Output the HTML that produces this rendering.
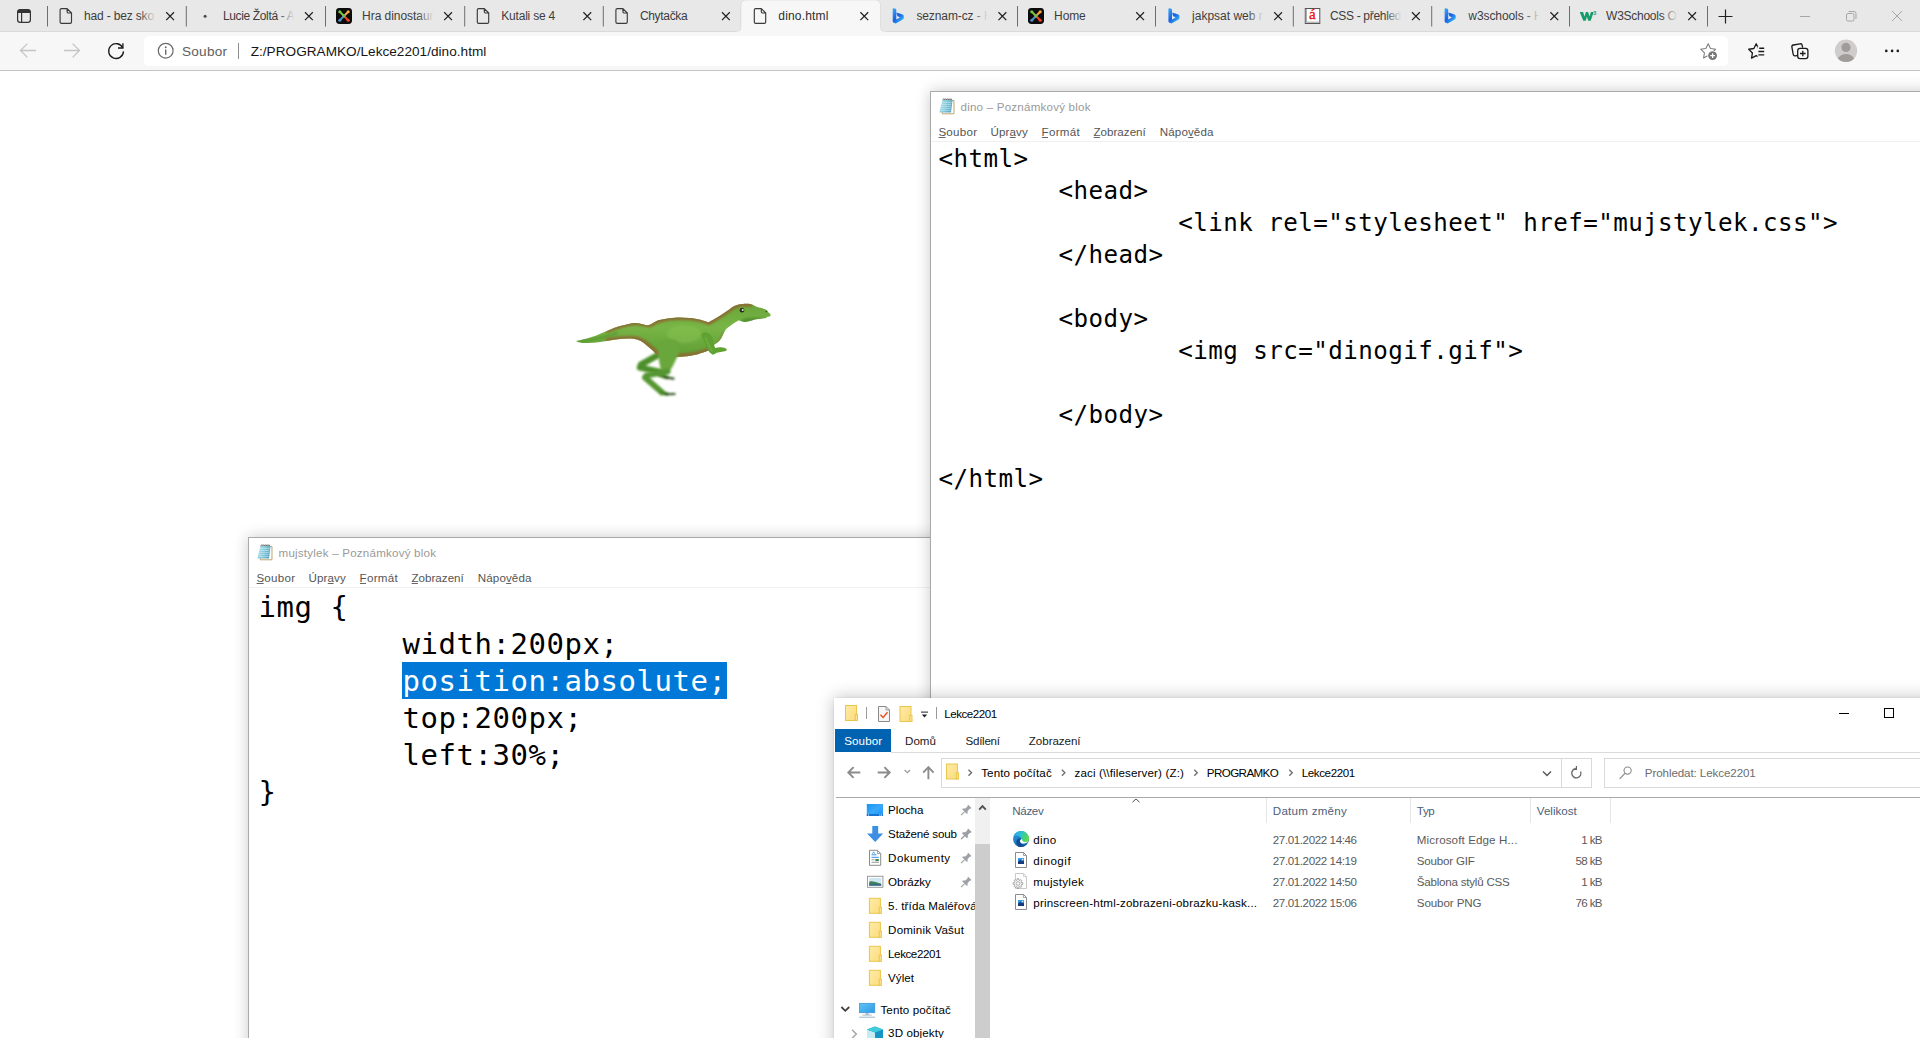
<!DOCTYPE html>
<html lang="cs">
<head>
<meta charset="utf-8">
<title>dino.html</title>
<style>

html,body{margin:0;padding:0;}
body{width:1920px;height:1038px;overflow:hidden;background:#fff;position:relative;font-family:"Liberation Sans",sans-serif;font-size:12px;color:#000;}
.abs{position:absolute;}
svg{position:absolute;left:0;top:0;overflow:visible;}
svg text{font-family:"Liberation Sans",sans-serif;white-space:pre;}
#tabbar{left:0;top:0;width:1920px;height:31px;background:#e8e8e8;border-bottom:1px solid #dadada;}
#toolbar{left:0;top:32px;width:1920px;height:38px;background:#f7f7f7;border-bottom:1px solid #c4c4c4;}
#addr{left:144px;top:36px;width:1584px;height:30px;background:#fff;border-radius:5px;}
.win{position:absolute;background:#fff;}
.np{border:1px solid #aaaaaa;box-shadow:0 0 14px rgba(0,0,0,.21);}
.np .menuline{position:absolute;left:0;top:49px;width:100%;height:1px;background:#f0f0f0;}
pre{margin:0;position:absolute;font-family:"DejaVu Sans Mono","Liberation Mono",monospace;color:#000;white-space:pre;}
.selt{color:#fff;}

</style>
</head>
<body>
<div class="abs" id="tabbar"></div>
<div class="abs" id="toolbar"></div>
<div class="abs" id="addr"></div>
<svg width="1920" height="72" viewBox="0 0 1920 72">
<defs><linearGradient id="bingg" x1="0.1" y1="0" x2="0.9" y2="1"><stop offset="0" stop-color="#3aa6f4"/><stop offset="0.5" stop-color="#1b5fe4"/><stop offset="0.8" stop-color="#2ea4ee"/><stop offset="1" stop-color="#3cd4f4"/></linearGradient>
<linearGradient id="fd0" x1="0" y1="0" x2="1" y2="0"><stop offset="0" stop-color="#e8e8e8" stop-opacity="0"/><stop offset="0.85" stop-color="#e8e8e8" stop-opacity="1"/></linearGradient>
<linearGradient id="fd1" x1="0" y1="0" x2="1" y2="0"><stop offset="0" stop-color="#e8e8e8" stop-opacity="0"/><stop offset="0.85" stop-color="#e8e8e8" stop-opacity="1"/></linearGradient>
<linearGradient id="fd2" x1="0" y1="0" x2="1" y2="0"><stop offset="0" stop-color="#e8e8e8" stop-opacity="0"/><stop offset="0.85" stop-color="#e8e8e8" stop-opacity="1"/></linearGradient>
<linearGradient id="fd3" x1="0" y1="0" x2="1" y2="0"><stop offset="0" stop-color="#e8e8e8" stop-opacity="0"/><stop offset="0.85" stop-color="#e8e8e8" stop-opacity="1"/></linearGradient>
<linearGradient id="fd4" x1="0" y1="0" x2="1" y2="0"><stop offset="0" stop-color="#e8e8e8" stop-opacity="0"/><stop offset="0.85" stop-color="#e8e8e8" stop-opacity="1"/></linearGradient>
<linearGradient id="fd5" x1="0" y1="0" x2="1" y2="0"><stop offset="0" stop-color="#f7f7f7" stop-opacity="0"/><stop offset="0.85" stop-color="#f7f7f7" stop-opacity="1"/></linearGradient>
<linearGradient id="fd6" x1="0" y1="0" x2="1" y2="0"><stop offset="0" stop-color="#e8e8e8" stop-opacity="0"/><stop offset="0.85" stop-color="#e8e8e8" stop-opacity="1"/></linearGradient>
<linearGradient id="fd7" x1="0" y1="0" x2="1" y2="0"><stop offset="0" stop-color="#e8e8e8" stop-opacity="0"/><stop offset="0.85" stop-color="#e8e8e8" stop-opacity="1"/></linearGradient>
<linearGradient id="fd8" x1="0" y1="0" x2="1" y2="0"><stop offset="0" stop-color="#e8e8e8" stop-opacity="0"/><stop offset="0.85" stop-color="#e8e8e8" stop-opacity="1"/></linearGradient>
<linearGradient id="fd9" x1="0" y1="0" x2="1" y2="0"><stop offset="0" stop-color="#e8e8e8" stop-opacity="0"/><stop offset="0.85" stop-color="#e8e8e8" stop-opacity="1"/></linearGradient>
<linearGradient id="fd10" x1="0" y1="0" x2="1" y2="0"><stop offset="0" stop-color="#e8e8e8" stop-opacity="0"/><stop offset="0.85" stop-color="#e8e8e8" stop-opacity="1"/></linearGradient>
<linearGradient id="fd11" x1="0" y1="0" x2="1" y2="0"><stop offset="0" stop-color="#e8e8e8" stop-opacity="0"/><stop offset="0.85" stop-color="#e8e8e8" stop-opacity="1"/></linearGradient>
</defs>
<path d="M736.5 31.5 Q741 31.5 741 27 V5.5 Q741 0 746.5 0 H875 Q880.5 0 880.5 5.5 V27 Q880.5 31.5 885 31.5 V32.5 H736.5 Z" fill="#f7f7f7" stroke="rgba(0,0,0,0.07)" stroke-width="1"/><rect x="736" y="31.6" width="150" height="1.4" fill="#f7f7f7"/>
<rect x="17.6" y="9.6" width="12.8" height="12.8" rx="2.6" fill="none" stroke="#333" stroke-width="1.2"/><path d="M17.6 12.6 a3 3 0 0 1 3 -3 h6.8 a3 3 0 0 1 3 3 v0.4 h-12.8 z" fill="#333"/><path d="M21.6 13 V22.4" stroke="#333" stroke-width="1.2"/>
<rect x="47.0" y="6" width="1" height="20.5" fill="#6e6e6e"/>
<rect x="185.8" y="6" width="1" height="20.5" fill="#6e6e6e"/>
<rect x="325.0" y="6" width="1" height="20.5" fill="#6e6e6e"/>
<rect x="464.2" y="6" width="1" height="20.5" fill="#6e6e6e"/>
<rect x="602.8" y="6" width="1" height="20.5" fill="#6e6e6e"/>
<rect x="1017.0" y="6" width="1" height="20.5" fill="#6e6e6e"/>
<rect x="1155.0" y="6" width="1" height="20.5" fill="#6e6e6e"/>
<rect x="1292.8" y="6" width="1" height="20.5" fill="#6e6e6e"/>
<rect x="1431.2" y="6" width="1" height="20.5" fill="#6e6e6e"/>
<rect x="1569.0" y="6" width="1" height="20.5" fill="#6e6e6e"/>
<rect x="1707.0" y="6" width="1" height="20.5" fill="#6e6e6e"/>
<path d="M61.50 8.60 h5.6 l4.4 4.4 v9 a1.4 1.4 0 0 1 -1.4 1.4 h-8.6 a1.4 1.4 0 0 1 -1.4 -1.4 v-12 a1.4 1.4 0 0 1 1.4 -1.4 z M67.10 8.60 v3 a1.4 1.4 0 0 0 1.4 1.4 h3" fill="none" stroke="#3a3a3a" stroke-width="1.15" stroke-linejoin="round"/>
<svg x="84.1" y="4" width="73" height="24" style="overflow:hidden"><text x="0" y="15.8" font-size="12" fill="#3d3d3d" letter-spacing="-0.17">had - bez skore</text></svg>
<rect x="139.5" y="5" width="19" height="22" fill="url(#fd0)"/>
<path d="M166.2 12.3 L174.0 20.1 M174.0 12.3 L166.2 20.1" stroke="#222" stroke-width="1.25" fill="none"/>
<circle cx="205.1" cy="16.2" r="1.5" fill="#4a4a4a"/>
<svg x="222.9" y="4" width="73" height="24" style="overflow:hidden"><text x="0" y="15.8" font-size="12" fill="#3d3d3d" letter-spacing="-0.355">Lucie Žoltá - Ap</text></svg>
<rect x="278.3" y="5" width="19" height="22" fill="url(#fd1)"/>
<path d="M305.0 12.3 L312.8 20.1 M312.8 12.3 L305.0 20.1" stroke="#222" stroke-width="1.25" fill="none"/>
<g transform="translate(336.00 8.00)"><rect x="0" y="0" width="16" height="16" rx="3.4" fill="#0b0b0b"/><path d="M4.3 4.3 L8.6 8.6" stroke="#7ac143" stroke-width="2" stroke-linecap="round"/><path d="M11.7 4.3 L7.4 8.6" stroke="#f9a541" stroke-width="2" stroke-linecap="round"/><path d="M4.3 11.7 L8.4 7.6" stroke="#4f91cd" stroke-width="2" stroke-linecap="round"/><path d="M11.7 11.7 L8.2 8.2" stroke="#f44321" stroke-width="2" stroke-linecap="round"/><path d="M6.6 6.6 L8.2 8.2" stroke="#7ac143" stroke-width="2" stroke-linecap="round"/><circle cx="3.8" cy="3.8" r="1.55" fill="#7ac143"/><circle cx="12.2" cy="3.8" r="1.55" fill="#f9a541"/><circle cx="3.8" cy="12.2" r="1.55" fill="#4f91cd"/><circle cx="12.2" cy="12.2" r="1.55" fill="#f44321"/></g>
<svg x="362.1" y="4" width="73" height="24" style="overflow:hidden"><text x="0" y="15.8" font-size="12" fill="#3d3d3d" letter-spacing="-0.05">Hra dinostaurus</text></svg>
<rect x="417.5" y="5" width="19" height="22" fill="url(#fd2)"/>
<path d="M444.2 12.3 L452.0 20.1 M452.0 12.3 L444.2 20.1" stroke="#222" stroke-width="1.25" fill="none"/>
<path d="M478.70 8.60 h5.6 l4.4 4.4 v9 a1.4 1.4 0 0 1 -1.4 1.4 h-8.6 a1.4 1.4 0 0 1 -1.4 -1.4 v-12 a1.4 1.4 0 0 1 1.4 -1.4 z M484.30 8.60 v3 a1.4 1.4 0 0 0 1.4 1.4 h3" fill="none" stroke="#3a3a3a" stroke-width="1.15" stroke-linejoin="round"/>
<svg x="501.3" y="4" width="73" height="24" style="overflow:hidden"><text x="0" y="15.8" font-size="12" fill="#3d3d3d" letter-spacing="-0.21">Kutali se 4</text></svg>
<path d="M583.4 12.3 L591.2 20.1 M591.2 12.3 L583.4 20.1" stroke="#222" stroke-width="1.25" fill="none"/>
<path d="M617.30 8.60 h5.6 l4.4 4.4 v9 a1.4 1.4 0 0 1 -1.4 1.4 h-8.6 a1.4 1.4 0 0 1 -1.4 -1.4 v-12 a1.4 1.4 0 0 1 1.4 -1.4 z M622.90 8.60 v3 a1.4 1.4 0 0 0 1.4 1.4 h3" fill="none" stroke="#3a3a3a" stroke-width="1.15" stroke-linejoin="round"/>
<svg x="639.9" y="4" width="73" height="24" style="overflow:hidden"><text x="0" y="15.8" font-size="12" fill="#3d3d3d" letter-spacing="-0.316">Chytačka</text></svg>
<path d="M722.0 12.3 L729.8 20.1 M729.8 12.3 L722.0 20.1" stroke="#222" stroke-width="1.25" fill="none"/>
<path d="M755.70 8.60 h5.6 l4.4 4.4 v9 a1.4 1.4 0 0 1 -1.4 1.4 h-8.6 a1.4 1.4 0 0 1 -1.4 -1.4 v-12 a1.4 1.4 0 0 1 1.4 -1.4 z M761.30 8.60 v3 a1.4 1.4 0 0 0 1.4 1.4 h3" fill="none" stroke="#3a3a3a" stroke-width="1.15" stroke-linejoin="round"/>
<svg x="778.3" y="4" width="73" height="24" style="overflow:hidden"><text x="0" y="15.8" font-size="12" fill="#2e2e2e" letter-spacing="0.172">dino.html</text></svg>
<path d="M860.4 12.3 L868.2 20.1 M868.2 12.3 L860.4 20.1" stroke="#222" stroke-width="1.25" fill="none"/>
<g transform="translate(890.30 8.00)"><path d="M2.4 1.3 C2.4 0.5 3.2 0 3.9 0.3 L5.2 0.8 C5.7 1 6 1.5 6 2 V11.5 L9.7 9.4 L7.9 8.6 C7.4 8.4 7.1 8 6.9 7.5 L6.2 5.6 C6 5 6.5 4.5 7.1 4.7 L12.3 6.5 C13 6.8 13.5 7.4 13.5 8.2 V9.8 C13.5 10.5 13.1 11.2 12.5 11.5 L6.4 15.1 C5.7 15.5 4.9 15.5 4.2 15.1 L3 14.4 C2.6 14.1 2.4 13.7 2.4 13.3 Z" fill="url(#bingg)"/></g>
<svg x="916.4" y="4" width="73" height="24" style="overflow:hidden"><text x="0" y="15.8" font-size="12" fill="#3d3d3d" letter-spacing="-0.1">seznam-cz - Hle</text></svg>
<rect x="971.8" y="5" width="19" height="22" fill="url(#fd6)"/>
<path d="M998.5 12.3 L1006.3 20.1 M1006.3 12.3 L998.5 20.1" stroke="#222" stroke-width="1.25" fill="none"/>
<g transform="translate(1028.00 8.00)"><rect x="0" y="0" width="16" height="16" rx="3.4" fill="#0b0b0b"/><path d="M4.3 4.3 L8.6 8.6" stroke="#7ac143" stroke-width="2" stroke-linecap="round"/><path d="M11.7 4.3 L7.4 8.6" stroke="#f9a541" stroke-width="2" stroke-linecap="round"/><path d="M4.3 11.7 L8.4 7.6" stroke="#4f91cd" stroke-width="2" stroke-linecap="round"/><path d="M11.7 11.7 L8.2 8.2" stroke="#f44321" stroke-width="2" stroke-linecap="round"/><path d="M6.6 6.6 L8.2 8.2" stroke="#7ac143" stroke-width="2" stroke-linecap="round"/><circle cx="3.8" cy="3.8" r="1.55" fill="#7ac143"/><circle cx="12.2" cy="3.8" r="1.55" fill="#f9a541"/><circle cx="3.8" cy="12.2" r="1.55" fill="#4f91cd"/><circle cx="12.2" cy="12.2" r="1.55" fill="#f44321"/></g>
<svg x="1054.1" y="4" width="73" height="24" style="overflow:hidden"><text x="0" y="15.8" font-size="12" fill="#3d3d3d" letter-spacing="-0.13">Home</text></svg>
<path d="M1136.2 12.3 L1144.0 20.1 M1144.0 12.3 L1136.2 20.1" stroke="#222" stroke-width="1.25" fill="none"/>
<g transform="translate(1166.00 8.00)"><path d="M2.4 1.3 C2.4 0.5 3.2 0 3.9 0.3 L5.2 0.8 C5.7 1 6 1.5 6 2 V11.5 L9.7 9.4 L7.9 8.6 C7.4 8.4 7.1 8 6.9 7.5 L6.2 5.6 C6 5 6.5 4.5 7.1 4.7 L12.3 6.5 C13 6.8 13.5 7.4 13.5 8.2 V9.8 C13.5 10.5 13.1 11.2 12.5 11.5 L6.4 15.1 C5.7 15.5 4.9 15.5 4.2 15.1 L3 14.4 C2.6 14.1 2.4 13.7 2.4 13.3 Z" fill="url(#bingg)"/></g>
<svg x="1192.1" y="4" width="73" height="24" style="overflow:hidden"><text x="0" y="15.8" font-size="12" fill="#3d3d3d" letter-spacing="0.0">jakpsat web na</text></svg>
<rect x="1247.5" y="5" width="19" height="22" fill="url(#fd8)"/>
<path d="M1274.2 12.3 L1282.0 20.1 M1282.0 12.3 L1274.2 20.1" stroke="#222" stroke-width="1.25" fill="none"/>
<g transform="translate(1304.80 8.00)"><rect x="0.5" y="0.5" width="14.5" height="15" fill="#fff" stroke="#555" stroke-width="1"/><path d="M1.5 1 V14.2 H14.5" fill="none" stroke="#9a9a9a" stroke-width="1"/><text x="4.3" y="11.2" font-size="15" fill="#f01010" stroke="#f01010" stroke-width="0.3" style="font-family:'Liberation Serif',serif">á</text></g>
<svg x="1329.9" y="4" width="73" height="24" style="overflow:hidden"><text x="0" y="15.8" font-size="12" fill="#3d3d3d" letter-spacing="-0.313">CSS - přehled v</text></svg>
<rect x="1385.3" y="5" width="19" height="22" fill="url(#fd9)"/>
<path d="M1412.0 12.3 L1419.8 20.1 M1419.8 12.3 L1412.0 20.1" stroke="#222" stroke-width="1.25" fill="none"/>
<g transform="translate(1442.20 8.00)"><path d="M2.4 1.3 C2.4 0.5 3.2 0 3.9 0.3 L5.2 0.8 C5.7 1 6 1.5 6 2 V11.5 L9.7 9.4 L7.9 8.6 C7.4 8.4 7.1 8 6.9 7.5 L6.2 5.6 C6 5 6.5 4.5 7.1 4.7 L12.3 6.5 C13 6.8 13.5 7.4 13.5 8.2 V9.8 C13.5 10.5 13.1 11.2 12.5 11.5 L6.4 15.1 C5.7 15.5 4.9 15.5 4.2 15.1 L3 14.4 C2.6 14.1 2.4 13.7 2.4 13.3 Z" fill="url(#bingg)"/></g>
<svg x="1468.3" y="4" width="73" height="24" style="overflow:hidden"><text x="0" y="15.8" font-size="12" fill="#3d3d3d" letter-spacing="-0.08">w3schools - Hle</text></svg>
<rect x="1523.7" y="5" width="19" height="22" fill="url(#fd10)"/>
<path d="M1550.4 12.3 L1558.2 20.1 M1558.2 12.3 L1550.4 20.1" stroke="#222" stroke-width="1.25" fill="none"/>
<g transform="translate(1578.10 8.00)"><path d="M1.6 4 H5 L6.4 8.6 L7.8 4 H10 L11.4 8.6 L12.8 4 H15.6 L12.6 12.8 H10.2 L8.8 8.8 L7.6 12.8 H5.2 Z" fill="#159c6a"/><text x="15.2" y="6.6" font-size="5.5" fill="#159c6a" style="font-weight:bold">3</text></g>
<svg x="1606.1" y="4" width="73" height="24" style="overflow:hidden"><text x="0" y="15.8" font-size="12" fill="#3d3d3d" letter-spacing="-0.263">W3Schools Onl</text></svg>
<rect x="1661.5" y="5" width="19" height="22" fill="url(#fd11)"/>
<path d="M1688.2 12.3 L1696.0 20.1 M1696.0 12.3 L1688.2 20.1" stroke="#222" stroke-width="1.25" fill="none"/>
<path d="M1718.5 16.5 H1732.5 M1725.5 9.5 V23.5" stroke="#222" stroke-width="1.2" fill="none"/>
<path d="M1800 16.5 H1810" stroke="#a6a6a6" stroke-width="1"/>
<rect x="1846.5" y="13.5" width="7.5" height="7.5" rx="1.5" fill="none" stroke="#a6a6a6" stroke-width="1"/><path d="M1848.5 11.5 h5.5 a2 2 0 0 1 2 2 v5.5" fill="none" stroke="#a6a6a6" stroke-width="1"/>
<path d="M1892 11 L1902 21 M1902 11 L1892 21" stroke="#a6a6a6" stroke-width="1" fill="none"/>
<path d="M36 50.5 H20.6 M27.4 43.6 L20.5 50.5 L27.4 57.4" stroke="#c4c4c4" stroke-width="1.3" fill="none"/>
<path d="M64 50.5 H79.4 M72.6 43.6 L79.5 50.5 L72.6 57.4" stroke="#c4c4c4" stroke-width="1.3" fill="none"/>
<path d="M122.8 47.9 A7.4 7.4 0 1 0 123.5 51.4" stroke="#1a1a1a" stroke-width="1.3" fill="none"/><path d="M122.9 43.2 V48 H118" stroke="#1a1a1a" stroke-width="1.3" fill="none"/>
<circle cx="165.7" cy="50.7" r="7.4" fill="none" stroke="#6a6a6a" stroke-width="1.2"/><circle cx="165.7" cy="47.2" r="0.95" fill="#6a6a6a"/><path d="M165.7 49.6 V54.8" stroke="#6a6a6a" stroke-width="1.4"/>
<text x="182.00" y="55.60" font-size="13.6" fill="#5e5e5e" textLength="45.00" lengthAdjust="spacing">Soubor</text>
<rect x="238" y="43" width="1" height="16" fill="#8e8e8e"/>
<text x="250.70" y="55.60" font-size="13.6" fill="#161616" textLength="235.60" lengthAdjust="spacing">Z:/PROGRAMKO/Lekce2201/dino.html</text>
<path d="M1708.20 43.70 L1710.52 48.40 L1715.71 49.16 L1711.96 52.82 L1712.84 57.99 L1708.20 55.55 L1703.56 57.99 L1704.44 52.82 L1700.69 49.16 L1705.88 48.40 Z" fill="none" stroke="#7a7a7a" stroke-width="1.05" stroke-linejoin="round" stroke-linecap="round"/>
<circle cx="1712.6" cy="55.6" r="5.2" fill="#fff"/><circle cx="1712.6" cy="55.6" r="4.4" fill="#767676"/><path d="M1710.2 55.6 H1715 M1712.6 53.2 V58" stroke="#fff" stroke-width="1.2"/>
<path d="M1756.20 43.80 L1758.52 48.50 L1763.71 49.26 L1759.96 52.92 L1760.84 58.09 L1756.20 55.65 L1751.56 58.09 L1752.44 52.92 L1748.69 49.26 L1753.88 48.50 Z" fill="none" stroke="#1a1a1a" stroke-width="1.3" stroke-linejoin="round" stroke-linecap="round"/>
<rect x="1757.6" y="46.4" width="8.6" height="14" fill="#f7f7f7"/>
<path d="M1759.2 48.2 H1764.2 M1758.4 51.5 H1764.2 M1758.4 54.8 H1764.2" stroke="#1a1a1a" stroke-width="1.35"/>
<path d="M1798 55.4 l-2.6 0.5 a1.9 1.9 0 0 1 -2.2 -1.5 l-1.3 -7.2 a1.9 1.9 0 0 1 1.5 -2.2 l6.6 -1.2 a1.9 1.9 0 0 1 2.2 1.5 l0.4 2.4" fill="none" stroke="#1a1a1a" stroke-width="1.3"/>
<rect x="1797.7" y="48.4" width="10.2" height="10.2" rx="2.3" fill="#f7f7f7" stroke="#1a1a1a" stroke-width="1.3"/><path d="M1800 53.5 H1805.6 M1802.8 50.7 V56.3" stroke="#1a1a1a" stroke-width="1.3"/>
<clipPath id="avc"><circle cx="1846" cy="50.8" r="11.2"/></clipPath><circle cx="1846" cy="50.8" r="11.2" fill="#cfcdcb"/><g clip-path="url(#avc)"><circle cx="1846" cy="47.4" r="4.6" fill="#9f9c99"/><ellipse cx="1846" cy="60.6" rx="8.6" ry="6.6" fill="#9f9c99"/></g>
<circle cx="1886.3" cy="50.9" r="1.3" fill="#1a1a1a"/><circle cx="1892.1" cy="50.9" r="1.3" fill="#1a1a1a"/><circle cx="1897.8" cy="50.9" r="1.3" fill="#1a1a1a"/>
</svg>
<svg style="left:560px;top:290px" width="230" height="120" viewBox="560 290 230 120">
<defs><filter id="b1" x="-10%" y="-10%" width="120%" height="120%"><feGaussianBlur stdDeviation="0.55"/></filter><filter id="b2" x="-20%" y="-20%" width="140%" height="140%"><feGaussianBlur stdDeviation="1.05"/></filter><linearGradient id="dg" x1="0" y1="0" x2="0" y2="1"><stop offset="0" stop-color="#6aa63a"/><stop offset="0.45" stop-color="#78b546"/><stop offset="1" stop-color="#5f9d34"/></linearGradient><linearGradient id="tg" x1="0" y1="0" x2="1" y2="0"><stop offset="0" stop-color="#4f9428"/><stop offset="1" stop-color="#72b040"/></linearGradient></defs>
<g filter="url(#b2)" fill="none" stroke-linecap="round" stroke-linejoin="round"><path d="M660 354 L641 364.5 L640 367.5 L663 372.6" stroke="#4e8f2a" stroke-width="6.4"/><path d="M660 375.2 L667 377.4" stroke="#4a8628" stroke-width="4"/><path d="M664 377 L673.5 378.6" stroke="#2f4f1c" stroke-width="2.2"/></g>
<g filter="url(#b1)"><path d="M576 341 C581 339.8 586 338.8 590.2 337.5 C598 335 604 332 610.5 329.4 C616 327.2 621 325.6 625.6 324.8 C630 323.6 633 323 635.8 323.1 C639 323.4 641 324 642.9 324.3 C646 325.2 648 325.4 649.9 324.8 C652 323.6 654 322.2 656 321.3 C659 320 662 319.2 666.1 318.8 C670 318 674 317.6 677.3 317.5 C682 317.4 686 317.6 690 318 C694 318.4 697 319 700.5 319.8 C703.6 320.6 706 321.6 708.6 322.3 C713 320 717 317.6 720.7 315.2 C724 313 728 310.4 730.8 308.2 C733 306.6 735 305.6 736.9 305.1 C739 304.3 741 304 743 303.9 C746 303.7 749 303.8 751.1 304.3 C753.4 305 755 306.2 757.1 307.1 C760 308 763 308.4 765.2 309.2 C767 310 768 311 768.3 312.2 C769.4 313 770.6 314 770.8 315.2 C770 316.4 768.6 316.8 767.3 316.8 C766.8 317.6 766 318.2 765.2 318.3 C762 318.6 759 318.8 756.1 319.3 C753 320 750.6 321 748 321.5 C746.4 321.9 744.6 322 743 321.8 C741.4 321.5 740 320.8 738.9 320.3 C736 321.8 733 323.6 730.8 325.4 C728.8 326.8 727 328 725.8 329.4 C724.4 331.4 723.6 333.4 722.7 335.5 C721.8 337.4 721 339 719.7 340.5 C718.2 342.2 716.4 343.6 714.6 344.6 C713 346.4 711.6 348 710 349.6 C707 351.4 704 352.4 700.5 353.2 C697 354.6 694 355.2 690.4 355.7 C686 356.4 682 356.7 678.2 356.7 C672 357 664 356.4 657 354.7 C655.6 353.8 654.8 352.8 654 351.7 C652 350 650 348.4 647.9 346.6 C645.6 344.4 643.4 342.4 640.8 341 C637.6 339.4 634.4 338.6 630.7 338.5 C625.6 338.4 620.6 338.8 615.5 339.5 C610.4 340.4 605.4 341.4 600.4 342 C595.4 342.8 590 343.2 585.2 343.1 C581.6 343 578.4 342.4 576 341 Z" fill="url(#dg)"/>
<clipPath id="dclip"><path d="M576 341 C581 339.8 586 338.8 590.2 337.5 C598 335 604 332 610.5 329.4 C616 327.2 621 325.6 625.6 324.8 C630 323.6 633 323 635.8 323.1 C639 323.4 641 324 642.9 324.3 C646 325.2 648 325.4 649.9 324.8 C652 323.6 654 322.2 656 321.3 C659 320 662 319.2 666.1 318.8 C670 318 674 317.6 677.3 317.5 C682 317.4 686 317.6 690 318 C694 318.4 697 319 700.5 319.8 C703.6 320.6 706 321.6 708.6 322.3 C713 320 717 317.6 720.7 315.2 C724 313 728 310.4 730.8 308.2 C733 306.6 735 305.6 736.9 305.1 C739 304.3 741 304 743 303.9 C746 303.7 749 303.8 751.1 304.3 C753.4 305 755 306.2 757.1 307.1 C760 308 763 308.4 765.2 309.2 C767 310 768 311 768.3 312.2 C769.4 313 770.6 314 770.8 315.2 C770 316.4 768.6 316.8 767.3 316.8 C766.8 317.6 766 318.2 765.2 318.3 C762 318.6 759 318.8 756.1 319.3 C753 320 750.6 321 748 321.5 C746.4 321.9 744.6 322 743 321.8 C741.4 321.5 740 320.8 738.9 320.3 C736 321.8 733 323.6 730.8 325.4 C728.8 326.8 727 328 725.8 329.4 C724.4 331.4 723.6 333.4 722.7 335.5 C721.8 337.4 721 339 719.7 340.5 C718.2 342.2 716.4 343.6 714.6 344.6 C713 346.4 711.6 348 710 349.6 C707 351.4 704 352.4 700.5 353.2 C697 354.6 694 355.2 690.4 355.7 C686 356.4 682 356.7 678.2 356.7 C672 357 664 356.4 657 354.7 C655.6 353.8 654.8 352.8 654 351.7 C652 350 650 348.4 647.9 346.6 C645.6 344.4 643.4 342.4 640.8 341 C637.6 339.4 634.4 338.6 630.7 338.5 C625.6 338.4 620.6 338.8 615.5 339.5 C610.4 340.4 605.4 341.4 600.4 342 C595.4 342.8 590 343.2 585.2 343.1 C581.6 343 578.4 342.4 576 341 Z"/></clipPath>
<g clip-path="url(#dclip)"><g filter="url(#b2)"><path d="M606 330.4 C618 325.6 630 322 638 322.4 C644 323.4 648 324.6 650.5 324.2 C655 321.2 662 318.6 670 317.6 C680 316.6 692 317.2 700 319 C704 320 707 321.4 709 322 C717 317.6 726 311.6 732 307.4 C737 304 745 303 752 304" fill="none" stroke="#8a6f34" stroke-width="4.6" opacity="1" transform="translate(0 0.7)"/><path d="M606 342.4 C616 340.4 628 339.4 636 340.2 C642 341.4 646 345 650 348.4 C653 351 655 353.8 658 355.4 C666 357.4 680 357.8 690 356.4 C698 355.4 706 353 711.4 349.6" fill="none" stroke="#8a6f34" stroke-width="5.6" opacity="1" transform="translate(0 -1.1)"/><path d="M716.5 344 C720.4 340.6 722.6 336.6 724.4 332.4" fill="none" stroke="#86803a" stroke-width="2.4" opacity="0.7"/><ellipse cx="684" cy="334" rx="17" ry="9" fill="#84bf50" opacity="0.6"/><path d="M738.9 321 C742 322.4 745 322.6 748 322.2 C752 321.2 756 320 765.2 318.9 C760 317.4 752 317.6 746 318.2 Z" fill="#4a8a2a" opacity="0.85"/><path d="M577 341.6 C590 340.6 604 337.6 618 333" fill="none" stroke="#4c8e26" stroke-width="2.4" opacity="0.55"/></g></g>
</g>
<g filter="url(#b2)"><path d="M660 343 C664 337.6 676 337.6 679.6 344 C680.6 350 678.4 355.6 676 359.6 C673.6 365 671 369.6 668.6 373.4 L662.6 375.8 C660.6 369.6 658.6 361 658.4 355 C658 350 658.6 346 660 343 Z" fill="#69a63a"/><path d="M667.6 371.6 L646.6 375.4 L645 377.6 L662 392.4" fill="none" stroke="#559630" stroke-width="6" stroke-linecap="round" stroke-linejoin="round"/><path d="M661.6 392.6 L667 394" fill="none" stroke="#4a8628" stroke-width="3.6" stroke-linecap="round"/><path d="M665 394.2 L674.6 394" fill="none" stroke="#2f4f1c" stroke-width="2" stroke-linecap="round"/></g>
<g filter="url(#b1)"><path d="M701.5 335.5 C700.6 332 707 330.4 711.6 336 C712.8 338.6 713.2 340.6 713.6 342.6 C714 344.8 714.4 346.6 715.1 348.1 C717.6 347.4 720.4 347 722.7 347.6 C724.6 348 726.4 348.6 726.8 349.6 C727 350.6 726 351 724.8 351.2 C722 351.6 719.4 352 716.7 352.7 C715.4 353.6 714 354.4 712.6 354.7 C710.4 353.6 708.8 351.6 707.6 349.6 C706.4 347.4 705.4 345 704.5 342.6 C703.4 340 702.2 337.6 701.5 335.5 Z" fill="#5fa232"/><path d="M705.4 337 C707 342 709 347 712.6 351.4" fill="none" stroke="#74b242" stroke-width="2.2" opacity="0.6" filter="url(#b1)"/></g>
<circle cx="742" cy="310.2" r="2.3" fill="#1c2a12"/><circle cx="742.7" cy="310" r="1.05" fill="#e8e8e8"/>
<circle cx="766.2" cy="311.6" r="0.8" fill="#3a5a22"/>
</svg>
<div class="win np" id="np2" style="left:248px;top:537px;width:1700px;height:520px;">
<div class="menuline"></div>
<div class="abs" style="left:153px;top:124px;width:325px;height:37px;background:#0078d7;"></div>
<pre style="left:9.5px;top:50.9px;font-size:29.0px;letter-spacing:0.541px;line-height:37px;">img {
        width:200px;
        <span class="selt">position:absolute;</span>
        top:200px;
        left:30%;
}</pre>
<svg width="1700" height="52" viewBox="0 0 1700 52">
<defs><linearGradient id="npg" x1="0" y1="0" x2="1" y2="0.3"><stop offset="0" stop-color="#b4e2ee"/><stop offset="0.55" stop-color="#84c8da"/><stop offset="1" stop-color="#5aa8c0"/></linearGradient></defs>
<g transform="translate(7.8 6.2)"><g><path d="M4.2 2.2 H15.2 V15.6 H3.4 Z" fill="#fdfdfd" stroke="#b89a62" stroke-width="0.9"/><path d="M3.6 1.8 H13.8 L12.2 14.2 H0.6 Z" fill="url(#npg)"/><path d="M3.00 4.2 H12.80" stroke="#e8f8fc" stroke-width="0.6" opacity="0.8"/><path d="M2.74 6.2 H12.54" stroke="#e8f8fc" stroke-width="0.6" opacity="0.8"/><path d="M2.48 8.2 H12.28" stroke="#e8f8fc" stroke-width="0.6" opacity="0.8"/><path d="M2.22 10.2 H12.02" stroke="#e8f8fc" stroke-width="0.6" opacity="0.8"/><path d="M1.96 12.2 H11.76" stroke="#e8f8fc" stroke-width="0.6" opacity="0.8"/><path d="M4 1.7 l0.9 -1.2 l0.9 1.2 l0.9 -1.2 l0.9 1.2 l0.9 -1.2 l0.9 1.2 l0.9 -1.2 l0.9 1.2 l0.9 -1.2 l0.9 1.2" fill="none" stroke="#3a3a3a" stroke-width="0.7"/></g></g>
<text x="29.50" y="19.20" font-size="11.6" fill="#9a9a9a" textLength="157.50" lengthAdjust="spacing">mujstylek – Poznámkový blok</text>
<text x="7.4" y="44.4" font-size="11.6" fill="#555" textLength="38.6" lengthAdjust="spacing">Soubor</text>
<rect x="7.6" y="45" width="7.0" height="1" fill="#666"/>
<text x="59.6" y="44.4" font-size="11.6" fill="#555" textLength="37.2" lengthAdjust="spacing">Úpravy</text>
<rect x="78.8" y="45" width="5.8" height="1" fill="#666"/>
<text x="110.6" y="44.4" font-size="11.6" fill="#555" textLength="38.2" lengthAdjust="spacing">Formát</text>
<rect x="110.9" y="45" width="6.1" height="1" fill="#666"/>
<text x="162.4" y="44.4" font-size="11.6" fill="#555" textLength="52.4" lengthAdjust="spacing">Zobrazení</text>
<rect x="162.7" y="45" width="6.2" height="1" fill="#666"/>
<text x="228.8" y="44.4" font-size="11.6" fill="#555" textLength="53.6" lengthAdjust="spacing">Nápověda</text>
<rect x="257.1" y="45" width="5.2" height="1" fill="#666"/>
</svg>
</div>
<div class="win np" id="np1" style="left:930px;top:91px;width:1000px;height:640px;">
<div class="menuline"></div>

<pre style="left:7.5px;top:50.6px;font-size:24.2px;letter-spacing:0.43px;line-height:32px;">&lt;html&gt;
        &lt;head&gt;
                &lt;link rel=&quot;stylesheet&quot; href=&quot;mujstylek.css&quot;&gt;
        &lt;/head&gt;

        &lt;body&gt;
                &lt;img src=&quot;dinogif.gif&quot;&gt;

        &lt;/body&gt;

&lt;/html&gt;</pre>
<svg width="1000" height="52" viewBox="0 0 1000 52">

<g transform="translate(7.8 6.2)"><g><path d="M4.2 2.2 H15.2 V15.6 H3.4 Z" fill="#fdfdfd" stroke="#b89a62" stroke-width="0.9"/><path d="M3.6 1.8 H13.8 L12.2 14.2 H0.6 Z" fill="url(#npg)"/><path d="M3.00 4.2 H12.80" stroke="#e8f8fc" stroke-width="0.6" opacity="0.8"/><path d="M2.74 6.2 H12.54" stroke="#e8f8fc" stroke-width="0.6" opacity="0.8"/><path d="M2.48 8.2 H12.28" stroke="#e8f8fc" stroke-width="0.6" opacity="0.8"/><path d="M2.22 10.2 H12.02" stroke="#e8f8fc" stroke-width="0.6" opacity="0.8"/><path d="M1.96 12.2 H11.76" stroke="#e8f8fc" stroke-width="0.6" opacity="0.8"/><path d="M4 1.7 l0.9 -1.2 l0.9 1.2 l0.9 -1.2 l0.9 1.2 l0.9 -1.2 l0.9 1.2 l0.9 -1.2 l0.9 1.2 l0.9 -1.2 l0.9 1.2" fill="none" stroke="#3a3a3a" stroke-width="0.7"/></g></g>
<text x="29.50" y="19.20" font-size="11.6" fill="#9a9a9a" textLength="130.00" lengthAdjust="spacing">dino – Poznámkový blok</text>
<text x="7.4" y="44.4" font-size="11.6" fill="#555" textLength="38.6" lengthAdjust="spacing">Soubor</text>
<rect x="7.6" y="45" width="7.0" height="1" fill="#666"/>
<text x="59.6" y="44.4" font-size="11.6" fill="#555" textLength="37.2" lengthAdjust="spacing">Úpravy</text>
<rect x="78.8" y="45" width="5.8" height="1" fill="#666"/>
<text x="110.6" y="44.4" font-size="11.6" fill="#555" textLength="38.2" lengthAdjust="spacing">Formát</text>
<rect x="110.9" y="45" width="6.1" height="1" fill="#666"/>
<text x="162.4" y="44.4" font-size="11.6" fill="#555" textLength="52.4" lengthAdjust="spacing">Zobrazení</text>
<rect x="162.7" y="45" width="6.2" height="1" fill="#666"/>
<text x="228.8" y="44.4" font-size="11.6" fill="#555" textLength="53.6" lengthAdjust="spacing">Nápověda</text>
<rect x="257.1" y="45" width="5.2" height="1" fill="#666"/>
</svg>
</div>
<div class="win" id="expl" style="left:834px;top:698px;width:1100px;height:360px;box-shadow:0 0 2px rgba(0,0,0,.10),0 0 16px rgba(0,0,0,.25);">
<div class="abs" style="left:1.00px;top:31.00px;width:56.00px;height:23.00px;background:#0063b1;"></div>
<div class="abs" style="left:57.00px;top:54.00px;width:1040.00px;height:1.00px;background:#dadbdc;"></div>
<div class="abs" style="left:107.00px;top:60.00px;width:651.00px;height:30.00px;border:1px solid #d9d9d9;box-sizing:border-box;"></div>
<div class="abs" style="left:727.00px;top:61.00px;width:1.00px;height:28.00px;background:#d9d9d9;"></div>
<div class="abs" style="left:770.00px;top:60.00px;width:330.00px;height:30.00px;border:1px solid #d9d9d9;box-sizing:border-box;"></div>
<div class="abs" style="left:2.00px;top:99.00px;width:1090.00px;height:1.00px;background:#a9a9a9;"></div>
<div class="abs" style="left:141.00px;top:100.00px;width:15.00px;height:250.00px;background:#f0f0f0;"></div>
<div class="abs" style="left:141.00px;top:146.00px;width:15.00px;height:200.00px;background:#cdcdcd;"></div>
<div class="abs" style="left:432.00px;top:100.00px;width:1.00px;height:25.00px;background:#e5e5e5;"></div>
<div class="abs" style="left:576.00px;top:100.00px;width:1.00px;height:25.00px;background:#e5e5e5;"></div>
<div class="abs" style="left:696.00px;top:100.00px;width:1.00px;height:25.00px;background:#e5e5e5;"></div>
<div class="abs" style="left:776.00px;top:100.00px;width:1.00px;height:25.00px;background:#e5e5e5;"></div>
<svg width="1100" height="360" viewBox="834 698 1100 360">
<defs><linearGradient id="fold" x1="0" y1="0" x2="1" y2="1"><stop offset="0" stop-color="#ffeaa6"/><stop offset="1" stop-color="#fbdc7e"/></linearGradient><linearGradient id="imgb" x1="0" y1="0" x2="0" y2="1"><stop offset="0" stop-color="#35a7f0"/><stop offset="1" stop-color="#1d5fb8"/></linearGradient><linearGradient id="desk" x1="0" y1="0" x2="1" y2="1"><stop offset="0" stop-color="#1b93f0"/><stop offset="0.5" stop-color="#38a8fb"/><stop offset="1" stop-color="#1b93f0"/></linearGradient><linearGradient id="edge1" x1="0" y1="0" x2="1" y2="1"><stop offset="0" stop-color="#2f9be0"/><stop offset="1" stop-color="#0c59a4"/></linearGradient><linearGradient id="edge2" x1="0" y1="0.2" x2="1" y2="0.55"><stop offset="0" stop-color="#2ba6f2"/><stop offset="0.45" stop-color="#2cc3cc"/><stop offset="0.8" stop-color="#4cd46c"/><stop offset="1" stop-color="#66dc44"/></linearGradient><linearGradient id="pcg" x1="0" y1="0" x2="1" y2="1"><stop offset="0" stop-color="#5fc4f4"/><stop offset="1" stop-color="#2a9be6"/></linearGradient></defs>
<rect x="845.50" y="705.50" width="11.00" height="15.00" fill="url(#fold)" stroke="#e9c64c" stroke-width="1"/><rect x="855.30" y="714.40" width="2.2" height="6.1" fill="#fde391" stroke="#e9c64c" stroke-width="1"/>
<rect x="866" y="707" width="1" height="12" fill="#9a9a9a"/>
<path d="M878.5 706.5 h7.5 l3.5 3.5 v11.5 h-11 z" fill="#f6f6f6" stroke="#8a8a8a" stroke-width="1"/><path d="M886 706.5 v3.5 h3.5" fill="none" stroke="#8a8a8a" stroke-width="0.8"/><path d="M880.4 714.8 L883.1 717.5 L887.5 712.2" fill="none" stroke="#e8501e" stroke-width="1.35"/>
<rect x="900.00" y="706.50" width="11.00" height="15.00" fill="url(#fold)" stroke="#e9c64c" stroke-width="1"/><rect x="909.80" y="715.40" width="2.2" height="6.1" fill="#fde391" stroke="#e9c64c" stroke-width="1"/>
<rect x="921" y="711.6" width="7" height="1" fill="#222"/><path d="M921.8 714.6 H927.2 L924.5 717.6 Z" fill="#222"/>
<rect x="936" y="707" width="1" height="12" fill="#9a9a9a"/>
<text x="944.20" y="718.00" font-size="11.6" fill="#000" textLength="53.00" lengthAdjust="spacing">Lekce2201</text>
<rect x="1839" y="713" width="10" height="1" fill="#000"/>
<rect x="1884.5" y="708.5" width="9" height="9" fill="none" stroke="#000" stroke-width="1"/>
<text x="844.20" y="745.00" font-size="11.6" fill="#fff" textLength="38.00" lengthAdjust="spacing">Soubor</text>
<text x="905.00" y="745.00" font-size="11.6" fill="#1a1a1a" textLength="31.00" lengthAdjust="spacing">Domů</text>
<text x="965.50" y="745.00" font-size="11.6" fill="#1a1a1a" textLength="34.50" lengthAdjust="spacing">Sdílení</text>
<text x="1028.80" y="745.00" font-size="11.6" fill="#1a1a1a" textLength="51.80" lengthAdjust="spacing">Zobrazení</text>
<path d="M860.3 772.5 H848.6 M853.6 767.2 L848.3 772.5 L853.6 777.8" fill="none" stroke="#8c8c8c" stroke-width="1.9"/>
<path d="M877.7 772.5 H889.4 M884.4 767.2 L889.7 772.5 L884.4 777.8" fill="none" stroke="#8c8c8c" stroke-width="1.9"/>
<path d="M904.6 770 L907.3 772.7 L910 770" fill="none" stroke="#9a9a9a" stroke-width="1.2"/>
<path d="M928.4 779.2 V767.4 M923.2 772.6 L928.4 767.2 L933.6 772.6" fill="none" stroke="#8c8c8c" stroke-width="1.9"/>
<rect x="946.50" y="764.00" width="11.00" height="15.00" fill="url(#fold)" stroke="#e9c64c" stroke-width="1"/><rect x="956.30" y="772.90" width="2.2" height="6.1" fill="#fde391" stroke="#e9c64c" stroke-width="1"/>
<path d="M968.50 769.80 L971.50 772.80 L968.50 775.80" fill="none" stroke="#6b6b6b" stroke-width="1.3"/>
<text x="981.20" y="777.40" font-size="11.6" fill="#000" textLength="70.50" lengthAdjust="spacing">Tento počítač</text>
<path d="M1061.90 769.80 L1064.90 772.80 L1061.90 775.80" fill="none" stroke="#6b6b6b" stroke-width="1.3"/>
<text x="1074.50" y="777.40" font-size="11.6" fill="#000" textLength="109.40" lengthAdjust="spacing">zaci (\\fileserver) (Z:)</text>
<path d="M1194.30 769.80 L1197.30 772.80 L1194.30 775.80" fill="none" stroke="#6b6b6b" stroke-width="1.3"/>
<text x="1206.80" y="777.40" font-size="11.6" fill="#000" textLength="72.00" lengthAdjust="spacing">PROGRAMKO</text>
<path d="M1289.30 769.80 L1292.30 772.80 L1289.30 775.80" fill="none" stroke="#6b6b6b" stroke-width="1.3"/>
<text x="1301.80" y="777.40" font-size="11.6" fill="#000" textLength="53.40" lengthAdjust="spacing">Lekce2201</text>
<path d="M1543 771.6 L1547 775.6 L1551 771.6" fill="none" stroke="#555" stroke-width="1.4"/>
<path d="M1576.2 768.6 A4.6 4.6 0 1 0 1580.6 771.4" fill="none" stroke="#666" stroke-width="1.3"/><path d="M1576.4 766 V769.4 H1573" fill="none" stroke="#666" stroke-width="1.2"/>
<circle cx="1627.6" cy="770.6" r="3.6" fill="none" stroke="#8a8a8a" stroke-width="1.1"/><path d="M1625 773.4 L1619.6 778.8" stroke="#8a8a8a" stroke-width="1.2"/>
<text x="1644.80" y="776.80" font-size="11.6" fill="#6d6d6d" textLength="111.00" lengthAdjust="spacing">Prohledat: Lekce2201</text>
<rect x="866.8" y="804.0" width="16.2" height="12" fill="url(#desk)"/><rect x="866.8" y="814.0" width="16.2" height="2" fill="#1674d0"/><rect x="868" y="814.5" width="1" height="1" fill="#fff"/><rect x="879.4" y="814.5" width="1" height="1" fill="#fff"/><rect x="881" y="814.5" width="1" height="1" fill="#fff"/>
<text x="888.10" y="813.60" font-size="11.6" fill="#000" textLength="35.40" lengthAdjust="spacing">Plocha</text>
<g transform="translate(965.60 810.60) rotate(45)"><path d="M-2.3 -6 H2.3 V-5 L1.6 -4.6 V-1.2 L3.4 0.6 V1.4 H-3.4 V0.6 L-1.6 -1.2 V-4.6 L-2.3 -5 Z" fill="#9aa0a6"/><path d="M0 1.4 V6.4" stroke="#9aa0a6" stroke-width="1.1"/></g>
<path d="M872.3 826.0 H878.2 V833.6 H883.2 L875.2 842.0 L867 833.6 H872.3 Z" fill="#3c8fe2"/>
<text x="888.10" y="837.60" font-size="11.6" fill="#000" textLength="68.80" lengthAdjust="spacing">Stažené soub</text>
<g transform="translate(965.60 834.60) rotate(45)"><path d="M-2.3 -6 H2.3 V-5 L1.6 -4.6 V-1.2 L3.4 0.6 V1.4 H-3.4 V0.6 L-1.6 -1.2 V-4.6 L-2.3 -5 Z" fill="#9aa0a6"/><path d="M0 1.4 V6.4" stroke="#9aa0a6" stroke-width="1.1"/></g>
<path d="M869.5 850.3 h8 l3.2 3.2 v11.8 h-11.2 z" fill="#fff" stroke="#8c8c8c" stroke-width="1"/><path d="M877.5 850.3 v3.2 h3.2" fill="none" stroke="#8c8c8c" stroke-width="0.8"/><path d="M871.5 854.8 H876.5 M871.5 857.3 H878.8" stroke="#3a8fe0" stroke-width="1"/><path d="M871.5 859.8 H874.5 M871.5 862.3 H878.8" stroke="#9a9a9a" stroke-width="1"/><rect x="875.4" y="859.0" width="3.4" height="2.2" fill="#3f8a58"/><path d="M872.4 853.8 l1.2 -2 l1.2 2" fill="none" stroke="#3a8fe0" stroke-width="0.8"/>
<text x="888.10" y="861.60" font-size="11.6" fill="#000" textLength="62.00" lengthAdjust="spacing">Dokumenty</text>
<g transform="translate(965.60 858.60) rotate(45)"><path d="M-2.3 -6 H2.3 V-5 L1.6 -4.6 V-1.2 L3.4 0.6 V1.4 H-3.4 V0.6 L-1.6 -1.2 V-4.6 L-2.3 -5 Z" fill="#9aa0a6"/><path d="M0 1.4 V6.4" stroke="#9aa0a6" stroke-width="1.1"/></g>
<rect x="867.5" y="876.3" width="15.4" height="11" fill="#fff" stroke="#9a9a9a" stroke-width="1"/><rect x="869.2" y="878.0" width="12" height="7.6" fill="#cfe6f5"/><path d="M869.2 885.6 V881.8 C872 880.4 875 882.2 881.2 883.8 V885.6 Z" fill="#3f7f5a"/><path d="M869.2 885.6 V884.4 H881.2 V885.6 Z" fill="#2a5f9a"/>
<text x="888.10" y="885.60" font-size="11.6" fill="#000" textLength="42.80" lengthAdjust="spacing">Obrázky</text>
<g transform="translate(965.60 882.60) rotate(45)"><path d="M-2.3 -6 H2.3 V-5 L1.6 -4.6 V-1.2 L3.4 0.6 V1.4 H-3.4 V0.6 L-1.6 -1.2 V-4.6 L-2.3 -5 Z" fill="#9aa0a6"/><path d="M0 1.4 V6.4" stroke="#9aa0a6" stroke-width="1.1"/></g>
<rect x="869.40" y="898.30" width="11.00" height="15.00" fill="url(#fold)" stroke="#e9c64c" stroke-width="1"/><rect x="879.20" y="907.20" width="2.2" height="6.1" fill="#fde391" stroke="#e9c64c" stroke-width="1"/>
<text x="888.10" y="909.60" font-size="11.6" fill="#000" textLength="88.60" lengthAdjust="spacing">5. třída Maléřová</text>
<rect x="869.40" y="922.30" width="11.00" height="15.00" fill="url(#fold)" stroke="#e9c64c" stroke-width="1"/><rect x="879.20" y="931.20" width="2.2" height="6.1" fill="#fde391" stroke="#e9c64c" stroke-width="1"/>
<text x="888.10" y="933.60" font-size="11.6" fill="#000" textLength="75.80" lengthAdjust="spacing">Dominik Vašut</text>
<rect x="869.40" y="946.30" width="11.00" height="15.00" fill="url(#fold)" stroke="#e9c64c" stroke-width="1"/><rect x="879.20" y="955.20" width="2.2" height="6.1" fill="#fde391" stroke="#e9c64c" stroke-width="1"/>
<text x="888.10" y="957.60" font-size="11.6" fill="#000" textLength="53.30" lengthAdjust="spacing">Lekce2201</text>
<rect x="869.40" y="970.30" width="11.00" height="15.00" fill="url(#fold)" stroke="#e9c64c" stroke-width="1"/><rect x="879.20" y="979.20" width="2.2" height="6.1" fill="#fde391" stroke="#e9c64c" stroke-width="1"/>
<text x="888.10" y="981.60" font-size="11.6" fill="#000" textLength="25.80" lengthAdjust="spacing">Výlet</text>
<rect x="975" y="894" width="15" height="24" fill="#cdcdcd"/>
<rect x="957" y="826" width="4" height="20" fill="#fff"/>
<g transform="translate(965.60 834.60) rotate(45)"><path d="M-2.3 -6 H2.3 V-5 L1.6 -4.6 V-1.2 L3.4 0.6 V1.4 H-3.4 V0.6 L-1.6 -1.2 V-4.6 L-2.3 -5 Z" fill="#9aa0a6"/><path d="M0 1.4 V6.4" stroke="#9aa0a6" stroke-width="1.1"/></g>
<path d="M979.2 809.6 L982.5 806.2 L985.8 809.6" fill="none" stroke="#505050" stroke-width="1.9"/>
<path d="M841.4 1007 L845.3 1010.8 L849.2 1007" fill="none" stroke="#404040" stroke-width="1.8"/>
<rect x="859.4" y="1003.3" width="15.4" height="9.4" fill="url(#pcg)" stroke="#3d8fd6" stroke-width="0.7"/><rect x="865.6" y="1013" width="3" height="2" fill="#a8bccb"/><rect x="862.5" y="1014.6" width="9.2" height="1" fill="#a8bccb"/><rect x="859.2" y="1016.7" width="15.8" height="1" fill="#9fb4c6"/>
<text x="880.40" y="1013.90" font-size="11.6" fill="#000" textLength="70.40" lengthAdjust="spacing">Tento počítač</text>
<path d="M852.10 1029.80 L856.30 1034.00 L852.10 1038.20" fill="none" stroke="#a6a6a6" stroke-width="1.5"/>
<path d="M867 1029.6 L875 1026.4 L883 1029.6 V1040 H867 Z" fill="#1796c6"/><path d="M867 1029.6 L875 1032.6 V1040 H867 Z" fill="#c4ecf2"/><path d="M867 1029.6 L875 1026.4 L883 1029.6 L875 1032.6 Z" fill="#3ecbdc"/>
<text x="888.10" y="1037.40" font-size="11.6" fill="#000" textLength="55.80" lengthAdjust="spacing">3D objekty</text>
<text x="1012.20" y="814.60" font-size="11.6" fill="#4c607a" textLength="31.60" lengthAdjust="spacing">Název</text>
<text x="1272.80" y="814.60" font-size="11.6" fill="#4c607a" textLength="74.00" lengthAdjust="spacing">Datum změny</text>
<text x="1416.80" y="814.60" font-size="11.6" fill="#4c607a" textLength="18.00" lengthAdjust="spacing">Typ</text>
<text x="1536.80" y="814.60" font-size="11.6" fill="#4c607a" textLength="40.00" lengthAdjust="spacing">Velikost</text>
<path d="M1132.4 802.2 L1136 799 L1139.6 802.2" fill="none" stroke="#555" stroke-width="1"/>
<text x="1033.30" y="843.70" font-size="11.6" fill="#000" textLength="23.00" lengthAdjust="spacing">dino</text>
<text x="1272.80" y="843.70" font-size="11.6" fill="#5a5a5a" textLength="84.20" lengthAdjust="spacing">27.01.2022 14:46</text>
<text x="1416.80" y="843.70" font-size="11.6" fill="#5a5a5a" textLength="100.60" lengthAdjust="spacing">Microsoft Edge H...</text>
<text x="1581.20" y="843.70" font-size="11.6" fill="#5a5a5a" textLength="21.40" lengthAdjust="spacing">1 kB</text>
<circle cx="1021" cy="839.1" r="8" fill="url(#edge1)"/><path d="M1013.4 836.6 A8 8 0 0 1 1029 838.5 C1029 842.1 1026 843.3000000000001 1023.6 843.3000000000001 C1021.6 843.3000000000001 1020 842.1 1020 840.7 C1020 839.7 1020.8 839.1 1021.6 838.9 C1020.5 835.7 1015 834.6 1013.4 836.6 Z" fill="url(#edge2)"/><path d="M1021.6 838.9 C1019.4 839.5 1019.2 843.5 1023.6 843.5 C1026 843.5 1028 842.5 1028.4 841.3000000000001 C1027 842.3000000000001 1022.6 842.7 1021.6 838.9 Z" fill="#fff"/><path d="M1018.6 846.7 C1015 843.1 1015.6 837.5 1021.4 838.7 C1018 840.7 1020 845.1 1025.6 845.5 C1024 846.7 1021 847.3000000000001 1018.6 846.7 Z" fill="#124a94"/>
<text x="1033.30" y="864.70" font-size="11.6" fill="#000" textLength="37.40" lengthAdjust="spacing">dinogif</text>
<text x="1272.80" y="864.70" font-size="11.6" fill="#5a5a5a" textLength="84.20" lengthAdjust="spacing">27.01.2022 14:19</text>
<text x="1416.80" y="864.70" font-size="11.6" fill="#5a5a5a" textLength="58.00" lengthAdjust="spacing">Soubor GIF</text>
<text x="1575.40" y="864.70" font-size="11.6" fill="#5a5a5a" textLength="27.20" lengthAdjust="spacing">58 kB</text>
<path d="M1015.5 852.5 h8 l3 3 v12 h-11 z" fill="#fff" stroke="#8c8c8c" stroke-width="1"/><path d="M1023.5 852.5 v3 h3" fill="none" stroke="#8c8c8c" stroke-width="0.8"/><rect x="1018" y="858" width="6" height="6" fill="url(#imgb)"/><path d="M1018 864 v-2 l2.2 -2.2 l1.6 1.6 l1 -0.8 l1.2 1.2 v2.2 z" fill="#163a7a"/><circle cx="1022.6" cy="859.5" r="0.7" fill="#e8f6ff"/>
<text x="1033.30" y="885.70" font-size="11.6" fill="#000" textLength="50.40" lengthAdjust="spacing">mujstylek</text>
<text x="1272.80" y="885.70" font-size="11.6" fill="#5a5a5a" textLength="84.20" lengthAdjust="spacing">27.01.2022 14:50</text>
<text x="1416.80" y="885.70" font-size="11.6" fill="#5a5a5a" textLength="93.00" lengthAdjust="spacing">Šablona stylů CSS</text>
<text x="1581.20" y="885.70" font-size="11.6" fill="#5a5a5a" textLength="21.40" lengthAdjust="spacing">1 kB</text>
<path d="M1015.5 873.5 h8 l3 3 v12 h-11 z" fill="#fff" stroke="#c9c9c9" stroke-width="1"/><path d="M1023.5 873.5 v3 h3" fill="none" stroke="#c9c9c9" stroke-width="0.8"/>
<path d="M1022.81 882.54 L1022.81 884.46 L1021.56 884.21 L1021.01 885.51 L1022.07 886.22 L1020.72 887.57 L1020.01 886.51 L1018.71 887.06 L1018.96 888.31 L1017.04 888.31 L1017.29 887.06 L1015.99 886.51 L1015.28 887.57 L1013.93 886.22 L1014.99 885.51 L1014.44 884.21 L1013.19 884.46 L1013.19 882.54 L1014.44 882.79 L1014.99 881.49 L1013.93 880.78 L1015.28 879.43 L1015.99 880.49 L1017.29 879.94 L1017.04 878.69 L1018.96 878.69 L1018.71 879.94 L1020.01 880.49 L1020.72 879.43 L1022.07 880.78 L1021.01 881.49 L1021.56 882.79 Z" fill="#f4f4f4" stroke="#9a9a9a" stroke-width="0.8"/><circle cx="1018" cy="883.5" r="1.76" fill="#fff" stroke="#9a9a9a" stroke-width="0.8"/>
<text x="1033.30" y="906.70" font-size="11.6" fill="#000" textLength="223.80" lengthAdjust="spacing">prinscreen-html-zobrazeni-obrazku-kask...</text>
<text x="1272.80" y="906.70" font-size="11.6" fill="#5a5a5a" textLength="84.20" lengthAdjust="spacing">27.01.2022 15:06</text>
<text x="1416.80" y="906.70" font-size="11.6" fill="#5a5a5a" textLength="64.80" lengthAdjust="spacing">Soubor PNG</text>
<text x="1575.40" y="906.70" font-size="11.6" fill="#5a5a5a" textLength="27.20" lengthAdjust="spacing">76 kB</text>
<path d="M1015.5 894.5 h8 l3 3 v12 h-11 z" fill="#fff" stroke="#8c8c8c" stroke-width="1"/><path d="M1023.5 894.5 v3 h3" fill="none" stroke="#8c8c8c" stroke-width="0.8"/><rect x="1018" y="900" width="6" height="6" fill="url(#imgb)"/><path d="M1018 906 v-2 l2.2 -2.2 l1.6 1.6 l1 -0.8 l1.2 1.2 v2.2 z" fill="#163a7a"/><circle cx="1022.6" cy="901.5" r="0.7" fill="#e8f6ff"/>
</svg>
</div>
</body>
</html>
